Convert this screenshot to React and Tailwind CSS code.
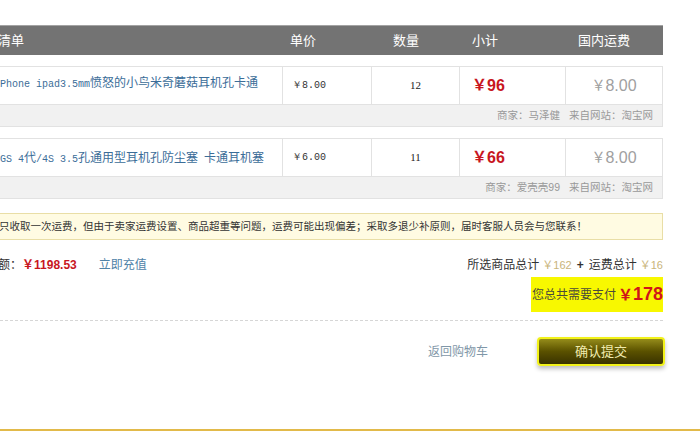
const cjk = "font-['Liberation_Sans','Noto_Sans_CJK_SC',sans-serif]"

const items = [
  {
    name: 'iPhone ipad3.5mm愤怒的小鸟米奇蘑菇耳机孔卡通',
    offset: '-ml-[6px] mb-[6px]',
    price: '8.00',
    qty: 12,
    subtotal: 96,
    seller: '马泽健',
  },
  {
    name: 'GS 4代/4S 3.5孔通用型耳机孔防尘塞 卡通耳机塞',
    offset: 'ml-0',
    price: '6.00',
    qty: 11,
    subtotal: 66,
    seller: '爱壳壳99',
  },
]

// latin runs look like half-width SimSun glyphs, so give them a mono face
function splitRuns(text) {
  return text.match(/[\x20-\x7e]+|[^\x20-\x7e]+/g)
}

function ItemRow({ item }) {
  return (
    <div className="border border-l-0 border-[#e2e2e2]">
      <div className="flex h-[37px]">
        <div className="w-[282px] shrink-0 min-w-0 flex items-center whitespace-nowrap text-[#3b6d98] text-[12px]">
          <span className={item.offset}>
            {splitRuns(item.name).map((run, i) =>
              /^[\x20-\x7e]+$/.test(run) ? (
                <span key={i} className="font-['Liberation_Mono',monospace] text-[10px] whitespace-pre">{run}</span>
              ) : (
                <span key={i}>{run}</span>
              )
            )}
          </span>
        </div>
        <div className="w-[89px] shrink-0 border-l border-[#e2e2e2] flex items-center pl-[9px] font-['Liberation_Mono',monospace] text-[10px] text-[#333]">
          ￥{item.price}
        </div>
        <div className="w-[88px] shrink-0 border-l border-[#e2e2e2] flex items-center justify-center font-['Liberation_Serif',serif] text-[11px] text-[#222]">
          {item.qty}
        </div>
        <div className="w-[106px] shrink-0 border-l border-[#e2e2e2] flex items-center pl-[12px] font-bold text-[#c8161e]">
          <span className="text-[15px]">￥</span>
          <span className="text-[16px]">{item.subtotal}</span>
        </div>
        <div className="flex-1 border-l border-[#e2e2e2] flex items-center justify-center text-[#a0a0a0]">
          <span className="text-[14px]">￥</span>
          <span className="text-[16px]">8.00</span>
        </div>
      </div>
      <div className="h-[22px] bg-[#f1f1f1] border-t border-[#e2e2e2] flex items-center justify-end gap-[9px] pr-[9px] text-[10.5px] text-[#999]">
        <span>商家：{item.seller}</span>
        <span>来自网站：淘宝网</span>
      </div>
    </div>
  )
}

export default function App() {
  return (
    <div className={`w-[700px] h-[431px] bg-white overflow-hidden text-[#333] ${cjk}`}>
      <div className="w-[663px] pt-[25px]">
        {/* table head */}
        <div className="h-[30px] flex items-center bg-[#737373] border-t border-[#a3a3a3] text-white text-[13px] whitespace-nowrap">
          <div className="w-[282px] shrink-0">
            <span className="-ml-[28px] inline-block">商品清单</span>
          </div>
          <div className="w-[89px] shrink-0 pl-[8px]">单价</div>
          <div className="w-[88px] shrink-0 pl-[22px]">数量</div>
          <div className="w-[106px] shrink-0 pl-[13px]">小计</div>
          <div className="flex-1 pl-[13px]">国内运费</div>
        </div>

        <div className="mt-[11px] flex flex-col gap-[11px]">
          {items.map((item) => (
            <ItemRow key={item.seller} item={item} />
          ))}
        </div>

        {/* notice */}
        <div className="mt-[14px] h-[27px] border border-l-0 border-[#e9dea6] bg-[#fffbe2] flex items-center whitespace-nowrap text-[10.5px] text-[#333]">
          <span className="-ml-[1px]">只收取一次运费，但由于卖家运费设置、商品超重等问题，运费可能出现偏差；采取多退少补原则，届时客服人员会与您联系！</span>
        </div>

        {/* balance + totals */}
        <div className="mt-[15px] h-[20px] flex items-center justify-between whitespace-nowrap">
          <div className="flex items-center text-[12px]">
            <span className="-ml-[14px]">余额：</span>
            <span className="font-bold text-[#c8161e]">￥1198.53</span>
            <span className="ml-[22px] text-[#4f83a8]">立即充值</span>
          </div>
          <div className="flex items-center text-[12px]">
            <span>所选商品总计</span>
            <span className="ml-[3px] text-[11px] text-[#c9b47a]">￥162</span>
            <span className="mx-[5px] font-bold">+</span>
            <span>运费总计</span>
            <span className="ml-[3px] text-[11px] text-[#c9b47a]">￥16</span>
          </div>
        </div>

        <div className="mt-[2px] flex justify-end">
          <div className="w-[132px] h-[35px] bg-[#f8f800] flex items-center justify-end whitespace-nowrap">
            <span className="text-[12px] text-[#4a4a3a]">您总共需要支付</span>
            <span className="ml-[2px] font-bold text-[#d0151a] flex items-baseline">
              <span className="text-[15px]">￥</span>
              <span className="text-[18px]">178</span>
            </span>
          </div>
        </div>

        <div className="mt-[8px] border-t border-dashed border-[#d6d6d6]" />

        {/* actions */}
        <div className="mt-[16px] flex items-center justify-end -mr-[2px]">
          <span className="text-[12px] text-[#7f97a8]">返回购物车</span>
          <button className="ml-[49px] w-[128px] h-[29px] rounded-[4px] border-2 border-[#f2f21a] bg-gradient-to-b from-[#958c1a] via-[#5a5100] to-[#3a3300] text-[13px] text-[#f1ebae] shadow-[0_3px_4px_rgba(0,0,0,0.25)]">
            确认提交
          </button>
        </div>
      </div>

      <div className="mt-[63px] h-[2px] bg-[#e2ba4a]" />
    </div>
  )
}
